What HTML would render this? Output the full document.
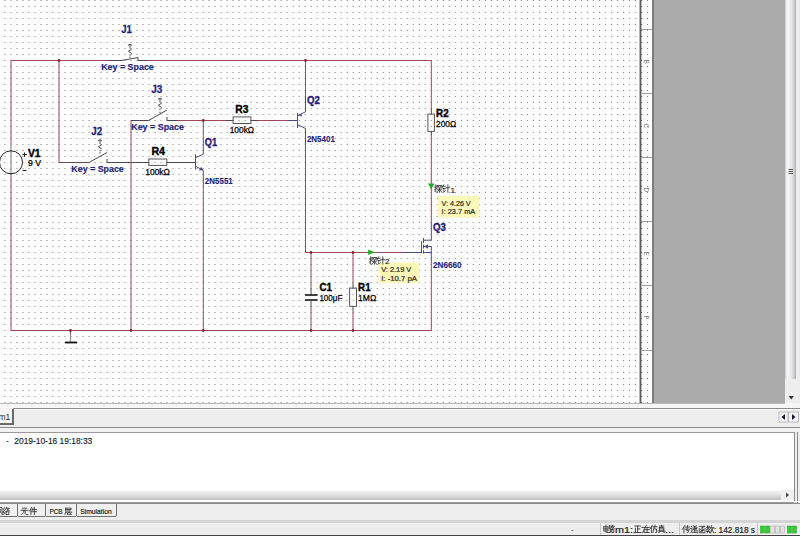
<!DOCTYPE html><html><head><meta charset="utf-8"><style>
html,body{margin:0;padding:0;width:800px;height:536px;overflow:hidden;background:#eeeeee;}
svg{position:absolute;left:0;top:0;}
</style></head><body>
<svg width="800" height="536" viewBox="0 0 800 536">
<defs>
<pattern id="dots" x="0" y="0" width="6" height="6" patternUnits="userSpaceOnUse"><rect x="4" y="0" width="2" height="1" fill="#a4a4a4"/></pattern>
<linearGradient id="vsb" x1="0" x2="1" y1="0" y2="0">
<stop offset="0" stop-color="#c8c8c8"/><stop offset="0.18" stop-color="#fafafa"/><stop offset="0.6" stop-color="#e6e6ea"/><stop offset="0.9" stop-color="#c4c4c8"/><stop offset="1" stop-color="#a8a8a8"/></linearGradient>
<linearGradient id="hsb" x1="0" x2="0" y1="0" y2="1">
<stop offset="0" stop-color="#f4f4f4"/><stop offset="0.5" stop-color="#e2e2e2"/><stop offset="1" stop-color="#c0c0c0"/></linearGradient>
</defs>

<rect x="0" y="0" width="640" height="403" fill="#ffffff" stroke="none" stroke-width="1"/>
<line x1="4.3" y1="0.5" x2="640" y2="0.5" stroke="#969696" stroke-width="1" stroke-dasharray="1.2 4.806"/>
<line x1="4.3" y1="6.5" x2="640" y2="6.5" stroke="#969696" stroke-width="1" stroke-dasharray="1.2 4.806"/>
<line x1="4.3" y1="12.5" x2="640" y2="12.5" stroke="#969696" stroke-width="1" stroke-dasharray="1.2 4.806"/>
<line x1="4.3" y1="18.5" x2="640" y2="18.5" stroke="#969696" stroke-width="1" stroke-dasharray="1.2 4.806"/>
<line x1="4.3" y1="24.5" x2="640" y2="24.5" stroke="#969696" stroke-width="1" stroke-dasharray="1.2 4.806"/>
<line x1="4.3" y1="30.5" x2="640" y2="30.5" stroke="#969696" stroke-width="1" stroke-dasharray="1.2 4.806"/>
<line x1="4.3" y1="36.5" x2="640" y2="36.5" stroke="#969696" stroke-width="1" stroke-dasharray="1.2 4.806"/>
<line x1="4.3" y1="42.5" x2="640" y2="42.5" stroke="#969696" stroke-width="1" stroke-dasharray="1.2 4.806"/>
<line x1="4.3" y1="48.5" x2="640" y2="48.5" stroke="#969696" stroke-width="1" stroke-dasharray="1.2 4.806"/>
<line x1="4.3" y1="54.5" x2="640" y2="54.5" stroke="#969696" stroke-width="1" stroke-dasharray="1.2 4.806"/>
<line x1="4.3" y1="60.5" x2="640" y2="60.5" stroke="#969696" stroke-width="1" stroke-dasharray="1.2 4.806"/>
<line x1="4.3" y1="66.5" x2="640" y2="66.5" stroke="#969696" stroke-width="1" stroke-dasharray="1.2 4.806"/>
<line x1="4.3" y1="72.5" x2="640" y2="72.5" stroke="#969696" stroke-width="1" stroke-dasharray="1.2 4.806"/>
<line x1="4.3" y1="78.5" x2="640" y2="78.5" stroke="#969696" stroke-width="1" stroke-dasharray="1.2 4.806"/>
<line x1="4.3" y1="84.5" x2="640" y2="84.5" stroke="#969696" stroke-width="1" stroke-dasharray="1.2 4.806"/>
<line x1="4.3" y1="90.5" x2="640" y2="90.5" stroke="#969696" stroke-width="1" stroke-dasharray="1.2 4.806"/>
<line x1="4.3" y1="96.5" x2="640" y2="96.5" stroke="#969696" stroke-width="1" stroke-dasharray="1.2 4.806"/>
<line x1="4.3" y1="102.5" x2="640" y2="102.5" stroke="#969696" stroke-width="1" stroke-dasharray="1.2 4.806"/>
<line x1="4.3" y1="108.5" x2="640" y2="108.5" stroke="#969696" stroke-width="1" stroke-dasharray="1.2 4.806"/>
<line x1="4.3" y1="114.5" x2="640" y2="114.5" stroke="#969696" stroke-width="1" stroke-dasharray="1.2 4.806"/>
<line x1="4.3" y1="120.5" x2="640" y2="120.5" stroke="#969696" stroke-width="1" stroke-dasharray="1.2 4.806"/>
<line x1="4.3" y1="126.5" x2="640" y2="126.5" stroke="#969696" stroke-width="1" stroke-dasharray="1.2 4.806"/>
<line x1="4.3" y1="132.5" x2="640" y2="132.5" stroke="#969696" stroke-width="1" stroke-dasharray="1.2 4.806"/>
<line x1="4.3" y1="138.5" x2="640" y2="138.5" stroke="#969696" stroke-width="1" stroke-dasharray="1.2 4.806"/>
<line x1="4.3" y1="144.5" x2="640" y2="144.5" stroke="#969696" stroke-width="1" stroke-dasharray="1.2 4.806"/>
<line x1="4.3" y1="150.5" x2="640" y2="150.5" stroke="#969696" stroke-width="1" stroke-dasharray="1.2 4.806"/>
<line x1="4.3" y1="156.5" x2="640" y2="156.5" stroke="#969696" stroke-width="1" stroke-dasharray="1.2 4.806"/>
<line x1="4.3" y1="162.5" x2="640" y2="162.5" stroke="#969696" stroke-width="1" stroke-dasharray="1.2 4.806"/>
<line x1="4.3" y1="168.5" x2="640" y2="168.5" stroke="#969696" stroke-width="1" stroke-dasharray="1.2 4.806"/>
<line x1="4.3" y1="174.5" x2="640" y2="174.5" stroke="#969696" stroke-width="1" stroke-dasharray="1.2 4.806"/>
<line x1="4.3" y1="180.5" x2="640" y2="180.5" stroke="#969696" stroke-width="1" stroke-dasharray="1.2 4.806"/>
<line x1="4.3" y1="186.5" x2="640" y2="186.5" stroke="#969696" stroke-width="1" stroke-dasharray="1.2 4.806"/>
<line x1="4.3" y1="192.5" x2="640" y2="192.5" stroke="#969696" stroke-width="1" stroke-dasharray="1.2 4.806"/>
<line x1="4.3" y1="198.5" x2="640" y2="198.5" stroke="#969696" stroke-width="1" stroke-dasharray="1.2 4.806"/>
<line x1="4.3" y1="204.5" x2="640" y2="204.5" stroke="#969696" stroke-width="1" stroke-dasharray="1.2 4.806"/>
<line x1="4.3" y1="210.5" x2="640" y2="210.5" stroke="#969696" stroke-width="1" stroke-dasharray="1.2 4.806"/>
<line x1="4.3" y1="216.5" x2="640" y2="216.5" stroke="#969696" stroke-width="1" stroke-dasharray="1.2 4.806"/>
<line x1="4.3" y1="222.5" x2="640" y2="222.5" stroke="#969696" stroke-width="1" stroke-dasharray="1.2 4.806"/>
<line x1="4.3" y1="228.5" x2="640" y2="228.5" stroke="#969696" stroke-width="1" stroke-dasharray="1.2 4.806"/>
<line x1="4.3" y1="234.5" x2="640" y2="234.5" stroke="#969696" stroke-width="1" stroke-dasharray="1.2 4.806"/>
<line x1="4.3" y1="240.5" x2="640" y2="240.5" stroke="#969696" stroke-width="1" stroke-dasharray="1.2 4.806"/>
<line x1="4.3" y1="246.5" x2="640" y2="246.5" stroke="#969696" stroke-width="1" stroke-dasharray="1.2 4.806"/>
<line x1="4.3" y1="252.5" x2="640" y2="252.5" stroke="#969696" stroke-width="1" stroke-dasharray="1.2 4.806"/>
<line x1="4.3" y1="258.5" x2="640" y2="258.5" stroke="#969696" stroke-width="1" stroke-dasharray="1.2 4.806"/>
<line x1="4.3" y1="264.5" x2="640" y2="264.5" stroke="#969696" stroke-width="1" stroke-dasharray="1.2 4.806"/>
<line x1="4.3" y1="270.5" x2="640" y2="270.5" stroke="#969696" stroke-width="1" stroke-dasharray="1.2 4.806"/>
<line x1="4.3" y1="276.5" x2="640" y2="276.5" stroke="#969696" stroke-width="1" stroke-dasharray="1.2 4.806"/>
<line x1="4.3" y1="282.5" x2="640" y2="282.5" stroke="#969696" stroke-width="1" stroke-dasharray="1.2 4.806"/>
<line x1="4.3" y1="288.5" x2="640" y2="288.5" stroke="#969696" stroke-width="1" stroke-dasharray="1.2 4.806"/>
<line x1="4.3" y1="294.5" x2="640" y2="294.5" stroke="#969696" stroke-width="1" stroke-dasharray="1.2 4.806"/>
<line x1="4.3" y1="300.5" x2="640" y2="300.5" stroke="#969696" stroke-width="1" stroke-dasharray="1.2 4.806"/>
<line x1="4.3" y1="306.5" x2="640" y2="306.5" stroke="#969696" stroke-width="1" stroke-dasharray="1.2 4.806"/>
<line x1="4.3" y1="312.5" x2="640" y2="312.5" stroke="#969696" stroke-width="1" stroke-dasharray="1.2 4.806"/>
<line x1="4.3" y1="318.5" x2="640" y2="318.5" stroke="#969696" stroke-width="1" stroke-dasharray="1.2 4.806"/>
<line x1="4.3" y1="324.5" x2="640" y2="324.5" stroke="#969696" stroke-width="1" stroke-dasharray="1.2 4.806"/>
<line x1="4.3" y1="330.5" x2="640" y2="330.5" stroke="#969696" stroke-width="1" stroke-dasharray="1.2 4.806"/>
<line x1="4.3" y1="336.5" x2="640" y2="336.5" stroke="#969696" stroke-width="1" stroke-dasharray="1.2 4.806"/>
<line x1="4.3" y1="342.5" x2="640" y2="342.5" stroke="#969696" stroke-width="1" stroke-dasharray="1.2 4.806"/>
<line x1="4.3" y1="348.5" x2="640" y2="348.5" stroke="#969696" stroke-width="1" stroke-dasharray="1.2 4.806"/>
<line x1="4.3" y1="354.5" x2="640" y2="354.5" stroke="#969696" stroke-width="1" stroke-dasharray="1.2 4.806"/>
<line x1="4.3" y1="360.5" x2="640" y2="360.5" stroke="#969696" stroke-width="1" stroke-dasharray="1.2 4.806"/>
<line x1="4.3" y1="366.5" x2="640" y2="366.5" stroke="#969696" stroke-width="1" stroke-dasharray="1.2 4.806"/>
<line x1="4.3" y1="372.5" x2="640" y2="372.5" stroke="#969696" stroke-width="1" stroke-dasharray="1.2 4.806"/>
<line x1="4.3" y1="378.5" x2="640" y2="378.5" stroke="#969696" stroke-width="1" stroke-dasharray="1.2 4.806"/>
<line x1="4.3" y1="384.5" x2="640" y2="384.5" stroke="#969696" stroke-width="1" stroke-dasharray="1.2 4.806"/>
<line x1="4.3" y1="390.5" x2="640" y2="390.5" stroke="#969696" stroke-width="1" stroke-dasharray="1.2 4.806"/>
<line x1="4.3" y1="396.5" x2="640" y2="396.5" stroke="#969696" stroke-width="1" stroke-dasharray="1.2 4.806"/>
<line x1="4.3" y1="402.5" x2="640" y2="402.5" stroke="#969696" stroke-width="1" stroke-dasharray="1.2 4.806"/>
<rect x="641" y="0" width="11" height="403" fill="#ffffff" stroke="none" stroke-width="1"/>
<line x1="646.9" y1="0.5" x2="648.1" y2="0.5" stroke="#8c8c8c" stroke-width="1"/>
<line x1="640.9" y1="0.5" x2="642.1" y2="0.5" stroke="#555" stroke-width="1"/>
<line x1="646.9" y1="6.5" x2="648.1" y2="6.5" stroke="#8c8c8c" stroke-width="1"/>
<line x1="640.9" y1="6.5" x2="642.1" y2="6.5" stroke="#555" stroke-width="1"/>
<line x1="646.9" y1="12.5" x2="648.1" y2="12.5" stroke="#8c8c8c" stroke-width="1"/>
<line x1="640.9" y1="12.5" x2="642.1" y2="12.5" stroke="#555" stroke-width="1"/>
<line x1="646.9" y1="18.5" x2="648.1" y2="18.5" stroke="#8c8c8c" stroke-width="1"/>
<line x1="640.9" y1="18.5" x2="642.1" y2="18.5" stroke="#555" stroke-width="1"/>
<line x1="646.9" y1="24.5" x2="648.1" y2="24.5" stroke="#8c8c8c" stroke-width="1"/>
<line x1="640.9" y1="24.5" x2="642.1" y2="24.5" stroke="#555" stroke-width="1"/>
<line x1="646.9" y1="30.5" x2="648.1" y2="30.5" stroke="#8c8c8c" stroke-width="1"/>
<line x1="640.9" y1="30.5" x2="642.1" y2="30.5" stroke="#555" stroke-width="1"/>
<line x1="646.9" y1="36.5" x2="648.1" y2="36.5" stroke="#8c8c8c" stroke-width="1"/>
<line x1="640.9" y1="36.5" x2="642.1" y2="36.5" stroke="#555" stroke-width="1"/>
<line x1="646.9" y1="42.5" x2="648.1" y2="42.5" stroke="#8c8c8c" stroke-width="1"/>
<line x1="640.9" y1="42.5" x2="642.1" y2="42.5" stroke="#555" stroke-width="1"/>
<line x1="646.9" y1="48.5" x2="648.1" y2="48.5" stroke="#8c8c8c" stroke-width="1"/>
<line x1="640.9" y1="48.5" x2="642.1" y2="48.5" stroke="#555" stroke-width="1"/>
<line x1="646.9" y1="54.5" x2="648.1" y2="54.5" stroke="#8c8c8c" stroke-width="1"/>
<line x1="640.9" y1="54.5" x2="642.1" y2="54.5" stroke="#555" stroke-width="1"/>
<line x1="646.9" y1="60.5" x2="648.1" y2="60.5" stroke="#8c8c8c" stroke-width="1"/>
<line x1="640.9" y1="60.5" x2="642.1" y2="60.5" stroke="#555" stroke-width="1"/>
<line x1="646.9" y1="66.5" x2="648.1" y2="66.5" stroke="#8c8c8c" stroke-width="1"/>
<line x1="640.9" y1="66.5" x2="642.1" y2="66.5" stroke="#555" stroke-width="1"/>
<line x1="646.9" y1="72.5" x2="648.1" y2="72.5" stroke="#8c8c8c" stroke-width="1"/>
<line x1="640.9" y1="72.5" x2="642.1" y2="72.5" stroke="#555" stroke-width="1"/>
<line x1="646.9" y1="78.5" x2="648.1" y2="78.5" stroke="#8c8c8c" stroke-width="1"/>
<line x1="640.9" y1="78.5" x2="642.1" y2="78.5" stroke="#555" stroke-width="1"/>
<line x1="646.9" y1="84.5" x2="648.1" y2="84.5" stroke="#8c8c8c" stroke-width="1"/>
<line x1="640.9" y1="84.5" x2="642.1" y2="84.5" stroke="#555" stroke-width="1"/>
<line x1="646.9" y1="90.5" x2="648.1" y2="90.5" stroke="#8c8c8c" stroke-width="1"/>
<line x1="640.9" y1="90.5" x2="642.1" y2="90.5" stroke="#555" stroke-width="1"/>
<line x1="646.9" y1="96.5" x2="648.1" y2="96.5" stroke="#8c8c8c" stroke-width="1"/>
<line x1="640.9" y1="96.5" x2="642.1" y2="96.5" stroke="#555" stroke-width="1"/>
<line x1="646.9" y1="102.5" x2="648.1" y2="102.5" stroke="#8c8c8c" stroke-width="1"/>
<line x1="640.9" y1="102.5" x2="642.1" y2="102.5" stroke="#555" stroke-width="1"/>
<line x1="646.9" y1="108.5" x2="648.1" y2="108.5" stroke="#8c8c8c" stroke-width="1"/>
<line x1="640.9" y1="108.5" x2="642.1" y2="108.5" stroke="#555" stroke-width="1"/>
<line x1="646.9" y1="114.5" x2="648.1" y2="114.5" stroke="#8c8c8c" stroke-width="1"/>
<line x1="640.9" y1="114.5" x2="642.1" y2="114.5" stroke="#555" stroke-width="1"/>
<line x1="646.9" y1="120.5" x2="648.1" y2="120.5" stroke="#8c8c8c" stroke-width="1"/>
<line x1="640.9" y1="120.5" x2="642.1" y2="120.5" stroke="#555" stroke-width="1"/>
<line x1="646.9" y1="126.5" x2="648.1" y2="126.5" stroke="#8c8c8c" stroke-width="1"/>
<line x1="640.9" y1="126.5" x2="642.1" y2="126.5" stroke="#555" stroke-width="1"/>
<line x1="646.9" y1="132.5" x2="648.1" y2="132.5" stroke="#8c8c8c" stroke-width="1"/>
<line x1="640.9" y1="132.5" x2="642.1" y2="132.5" stroke="#555" stroke-width="1"/>
<line x1="646.9" y1="138.5" x2="648.1" y2="138.5" stroke="#8c8c8c" stroke-width="1"/>
<line x1="640.9" y1="138.5" x2="642.1" y2="138.5" stroke="#555" stroke-width="1"/>
<line x1="646.9" y1="144.5" x2="648.1" y2="144.5" stroke="#8c8c8c" stroke-width="1"/>
<line x1="640.9" y1="144.5" x2="642.1" y2="144.5" stroke="#555" stroke-width="1"/>
<line x1="646.9" y1="150.5" x2="648.1" y2="150.5" stroke="#8c8c8c" stroke-width="1"/>
<line x1="640.9" y1="150.5" x2="642.1" y2="150.5" stroke="#555" stroke-width="1"/>
<line x1="646.9" y1="156.5" x2="648.1" y2="156.5" stroke="#8c8c8c" stroke-width="1"/>
<line x1="640.9" y1="156.5" x2="642.1" y2="156.5" stroke="#555" stroke-width="1"/>
<line x1="646.9" y1="162.5" x2="648.1" y2="162.5" stroke="#8c8c8c" stroke-width="1"/>
<line x1="640.9" y1="162.5" x2="642.1" y2="162.5" stroke="#555" stroke-width="1"/>
<line x1="646.9" y1="168.5" x2="648.1" y2="168.5" stroke="#8c8c8c" stroke-width="1"/>
<line x1="640.9" y1="168.5" x2="642.1" y2="168.5" stroke="#555" stroke-width="1"/>
<line x1="646.9" y1="174.5" x2="648.1" y2="174.5" stroke="#8c8c8c" stroke-width="1"/>
<line x1="640.9" y1="174.5" x2="642.1" y2="174.5" stroke="#555" stroke-width="1"/>
<line x1="646.9" y1="180.5" x2="648.1" y2="180.5" stroke="#8c8c8c" stroke-width="1"/>
<line x1="640.9" y1="180.5" x2="642.1" y2="180.5" stroke="#555" stroke-width="1"/>
<line x1="646.9" y1="186.5" x2="648.1" y2="186.5" stroke="#8c8c8c" stroke-width="1"/>
<line x1="640.9" y1="186.5" x2="642.1" y2="186.5" stroke="#555" stroke-width="1"/>
<line x1="646.9" y1="192.5" x2="648.1" y2="192.5" stroke="#8c8c8c" stroke-width="1"/>
<line x1="640.9" y1="192.5" x2="642.1" y2="192.5" stroke="#555" stroke-width="1"/>
<line x1="646.9" y1="198.5" x2="648.1" y2="198.5" stroke="#8c8c8c" stroke-width="1"/>
<line x1="640.9" y1="198.5" x2="642.1" y2="198.5" stroke="#555" stroke-width="1"/>
<line x1="646.9" y1="204.5" x2="648.1" y2="204.5" stroke="#8c8c8c" stroke-width="1"/>
<line x1="640.9" y1="204.5" x2="642.1" y2="204.5" stroke="#555" stroke-width="1"/>
<line x1="646.9" y1="210.5" x2="648.1" y2="210.5" stroke="#8c8c8c" stroke-width="1"/>
<line x1="640.9" y1="210.5" x2="642.1" y2="210.5" stroke="#555" stroke-width="1"/>
<line x1="646.9" y1="216.5" x2="648.1" y2="216.5" stroke="#8c8c8c" stroke-width="1"/>
<line x1="640.9" y1="216.5" x2="642.1" y2="216.5" stroke="#555" stroke-width="1"/>
<line x1="646.9" y1="222.5" x2="648.1" y2="222.5" stroke="#8c8c8c" stroke-width="1"/>
<line x1="640.9" y1="222.5" x2="642.1" y2="222.5" stroke="#555" stroke-width="1"/>
<line x1="646.9" y1="228.5" x2="648.1" y2="228.5" stroke="#8c8c8c" stroke-width="1"/>
<line x1="640.9" y1="228.5" x2="642.1" y2="228.5" stroke="#555" stroke-width="1"/>
<line x1="646.9" y1="234.5" x2="648.1" y2="234.5" stroke="#8c8c8c" stroke-width="1"/>
<line x1="640.9" y1="234.5" x2="642.1" y2="234.5" stroke="#555" stroke-width="1"/>
<line x1="646.9" y1="240.5" x2="648.1" y2="240.5" stroke="#8c8c8c" stroke-width="1"/>
<line x1="640.9" y1="240.5" x2="642.1" y2="240.5" stroke="#555" stroke-width="1"/>
<line x1="646.9" y1="246.5" x2="648.1" y2="246.5" stroke="#8c8c8c" stroke-width="1"/>
<line x1="640.9" y1="246.5" x2="642.1" y2="246.5" stroke="#555" stroke-width="1"/>
<line x1="646.9" y1="252.5" x2="648.1" y2="252.5" stroke="#8c8c8c" stroke-width="1"/>
<line x1="640.9" y1="252.5" x2="642.1" y2="252.5" stroke="#555" stroke-width="1"/>
<line x1="646.9" y1="258.5" x2="648.1" y2="258.5" stroke="#8c8c8c" stroke-width="1"/>
<line x1="640.9" y1="258.5" x2="642.1" y2="258.5" stroke="#555" stroke-width="1"/>
<line x1="646.9" y1="264.5" x2="648.1" y2="264.5" stroke="#8c8c8c" stroke-width="1"/>
<line x1="640.9" y1="264.5" x2="642.1" y2="264.5" stroke="#555" stroke-width="1"/>
<line x1="646.9" y1="270.5" x2="648.1" y2="270.5" stroke="#8c8c8c" stroke-width="1"/>
<line x1="640.9" y1="270.5" x2="642.1" y2="270.5" stroke="#555" stroke-width="1"/>
<line x1="646.9" y1="276.5" x2="648.1" y2="276.5" stroke="#8c8c8c" stroke-width="1"/>
<line x1="640.9" y1="276.5" x2="642.1" y2="276.5" stroke="#555" stroke-width="1"/>
<line x1="646.9" y1="282.5" x2="648.1" y2="282.5" stroke="#8c8c8c" stroke-width="1"/>
<line x1="640.9" y1="282.5" x2="642.1" y2="282.5" stroke="#555" stroke-width="1"/>
<line x1="646.9" y1="288.5" x2="648.1" y2="288.5" stroke="#8c8c8c" stroke-width="1"/>
<line x1="640.9" y1="288.5" x2="642.1" y2="288.5" stroke="#555" stroke-width="1"/>
<line x1="646.9" y1="294.5" x2="648.1" y2="294.5" stroke="#8c8c8c" stroke-width="1"/>
<line x1="640.9" y1="294.5" x2="642.1" y2="294.5" stroke="#555" stroke-width="1"/>
<line x1="646.9" y1="300.5" x2="648.1" y2="300.5" stroke="#8c8c8c" stroke-width="1"/>
<line x1="640.9" y1="300.5" x2="642.1" y2="300.5" stroke="#555" stroke-width="1"/>
<line x1="646.9" y1="306.5" x2="648.1" y2="306.5" stroke="#8c8c8c" stroke-width="1"/>
<line x1="640.9" y1="306.5" x2="642.1" y2="306.5" stroke="#555" stroke-width="1"/>
<line x1="646.9" y1="312.5" x2="648.1" y2="312.5" stroke="#8c8c8c" stroke-width="1"/>
<line x1="640.9" y1="312.5" x2="642.1" y2="312.5" stroke="#555" stroke-width="1"/>
<line x1="646.9" y1="318.5" x2="648.1" y2="318.5" stroke="#8c8c8c" stroke-width="1"/>
<line x1="640.9" y1="318.5" x2="642.1" y2="318.5" stroke="#555" stroke-width="1"/>
<line x1="646.9" y1="324.5" x2="648.1" y2="324.5" stroke="#8c8c8c" stroke-width="1"/>
<line x1="640.9" y1="324.5" x2="642.1" y2="324.5" stroke="#555" stroke-width="1"/>
<line x1="646.9" y1="330.5" x2="648.1" y2="330.5" stroke="#8c8c8c" stroke-width="1"/>
<line x1="640.9" y1="330.5" x2="642.1" y2="330.5" stroke="#555" stroke-width="1"/>
<line x1="646.9" y1="336.5" x2="648.1" y2="336.5" stroke="#8c8c8c" stroke-width="1"/>
<line x1="640.9" y1="336.5" x2="642.1" y2="336.5" stroke="#555" stroke-width="1"/>
<line x1="646.9" y1="342.5" x2="648.1" y2="342.5" stroke="#8c8c8c" stroke-width="1"/>
<line x1="640.9" y1="342.5" x2="642.1" y2="342.5" stroke="#555" stroke-width="1"/>
<line x1="646.9" y1="348.5" x2="648.1" y2="348.5" stroke="#8c8c8c" stroke-width="1"/>
<line x1="640.9" y1="348.5" x2="642.1" y2="348.5" stroke="#555" stroke-width="1"/>
<line x1="646.9" y1="354.5" x2="648.1" y2="354.5" stroke="#8c8c8c" stroke-width="1"/>
<line x1="640.9" y1="354.5" x2="642.1" y2="354.5" stroke="#555" stroke-width="1"/>
<line x1="646.9" y1="360.5" x2="648.1" y2="360.5" stroke="#8c8c8c" stroke-width="1"/>
<line x1="640.9" y1="360.5" x2="642.1" y2="360.5" stroke="#555" stroke-width="1"/>
<line x1="646.9" y1="366.5" x2="648.1" y2="366.5" stroke="#8c8c8c" stroke-width="1"/>
<line x1="640.9" y1="366.5" x2="642.1" y2="366.5" stroke="#555" stroke-width="1"/>
<line x1="646.9" y1="372.5" x2="648.1" y2="372.5" stroke="#8c8c8c" stroke-width="1"/>
<line x1="640.9" y1="372.5" x2="642.1" y2="372.5" stroke="#555" stroke-width="1"/>
<line x1="646.9" y1="378.5" x2="648.1" y2="378.5" stroke="#8c8c8c" stroke-width="1"/>
<line x1="640.9" y1="378.5" x2="642.1" y2="378.5" stroke="#555" stroke-width="1"/>
<line x1="646.9" y1="384.5" x2="648.1" y2="384.5" stroke="#8c8c8c" stroke-width="1"/>
<line x1="640.9" y1="384.5" x2="642.1" y2="384.5" stroke="#555" stroke-width="1"/>
<line x1="646.9" y1="390.5" x2="648.1" y2="390.5" stroke="#8c8c8c" stroke-width="1"/>
<line x1="640.9" y1="390.5" x2="642.1" y2="390.5" stroke="#555" stroke-width="1"/>
<line x1="646.9" y1="396.5" x2="648.1" y2="396.5" stroke="#8c8c8c" stroke-width="1"/>
<line x1="640.9" y1="396.5" x2="642.1" y2="396.5" stroke="#555" stroke-width="1"/>
<line x1="646.9" y1="402.5" x2="648.1" y2="402.5" stroke="#8c8c8c" stroke-width="1"/>
<line x1="640.9" y1="402.5" x2="642.1" y2="402.5" stroke="#555" stroke-width="1"/>
<rect x="639" y="0" width="1" height="403" fill="#b4b4b4" stroke="none" stroke-width="1"/>
<rect x="640" y="0" width="1.4" height="403" fill="#5e5e5e" stroke="none" stroke-width="1"/>
<rect x="652" y="0" width="133" height="403" fill="#ababab" stroke="none" stroke-width="1"/>
<rect x="652" y="0" width="2" height="403" fill="#7c7c7c" stroke="none" stroke-width="1"/>
<line x1="641" y1="29.5" x2="652" y2="29.5" stroke="#a0a0a0" stroke-width="1"/>
<line x1="641" y1="93.5" x2="652" y2="93.5" stroke="#a0a0a0" stroke-width="1"/>
<line x1="641" y1="157.5" x2="652" y2="157.5" stroke="#a0a0a0" stroke-width="1"/>
<line x1="641" y1="221.5" x2="652" y2="221.5" stroke="#a0a0a0" stroke-width="1"/>
<line x1="641" y1="285.5" x2="652" y2="285.5" stroke="#a0a0a0" stroke-width="1"/>
<line x1="641" y1="350.5" x2="652" y2="350.5" stroke="#a0a0a0" stroke-width="1"/>
<text x="0" y="0" transform="translate(643.6 59.5) rotate(90)" font-family="Liberation Sans" font-size="6.5" fill="#7a7a7a">B</text>
<text x="0" y="0" transform="translate(643.6 123.5) rotate(90)" font-family="Liberation Sans" font-size="6.5" fill="#7a7a7a">C</text>
<text x="0" y="0" transform="translate(643.6 187.5) rotate(90)" font-family="Liberation Sans" font-size="6.5" fill="#7a7a7a">D</text>
<text x="0" y="0" transform="translate(643.6 251.5) rotate(90)" font-family="Liberation Sans" font-size="6.5" fill="#7a7a7a">E</text>
<text x="0" y="0" transform="translate(643.6 315.5) rotate(90)" font-family="Liberation Sans" font-size="6.5" fill="#7a7a7a">F</text>
<rect x="785" y="0" width="15" height="403" fill="#eeeeee" stroke="none" stroke-width="1"/>
<rect x="785" y="0" width="11" height="379" fill="url(#vsb)" stroke="none" stroke-width="1"/>
<line x1="788.5" y1="169.5" x2="793" y2="169.5" stroke="#555" stroke-width="1"/>
<line x1="788.5" y1="171.5" x2="793" y2="171.5" stroke="#555" stroke-width="1"/>
<line x1="788.5" y1="173.5" x2="793" y2="173.5" stroke="#555" stroke-width="1"/>
<path d="M788.5 396 L794 396 L791.25 399.5 Z" fill="#333"/>
<rect x="0" y="403" width="800" height="5" fill="#f6f6f6" stroke="none" stroke-width="1"/>
<rect x="0" y="403" width="785" height="1" fill="#b8b8b8" stroke="none" stroke-width="1"/>
<rect x="13" y="408" width="787" height="1" fill="#8c8c8c" stroke="none" stroke-width="1"/>
<rect x="0" y="409" width="800" height="18" fill="#eeeeee" stroke="none" stroke-width="1"/>
<rect x="0" y="409" width="13" height="15" fill="#f8f8f8" stroke="none" stroke-width="1"/>
<rect x="12" y="409" width="2" height="16" fill="#6a6a6a" stroke="none" stroke-width="1"/>
<rect x="0" y="423" width="14" height="2" fill="#6a6a6a" stroke="none" stroke-width="1"/>
<rect x="14" y="409" width="786" height="1" fill="#fafafa" stroke="none" stroke-width="1"/>
<text x="-1.5" y="420" font-family="Liberation Sans" font-size="8.5" fill="#222">m1</text>
<rect x="779" y="412" width="9" height="10" fill="#f4f4f8" stroke="#9a9a9a" stroke-width="0.6"/>
<rect x="788.5" y="412" width="10" height="10" fill="#f4f4f8" stroke="#9a9a9a" stroke-width="0.6"/>
<path d="M785 414 L785 420 L781.5 417 Z" fill="#1a1a3a"/>
<path d="M792 414 L792 420 L795.5 417 Z" fill="#1a1a3a"/>
<rect x="0" y="427" width="800" height="1" fill="#8c8c8c" stroke="none" stroke-width="1"/>
<rect x="0" y="428" width="800" height="4" fill="#f2f2f2" stroke="none" stroke-width="1"/>
<rect x="0" y="432" width="797" height="73" fill="#9a9a9a" stroke="none" stroke-width="1"/>
<rect x="0" y="433" width="794" height="68" fill="#ffffff" stroke="none" stroke-width="1"/>
<rect x="794" y="432" width="3" height="72" fill="#eeeeee" stroke="none" stroke-width="1"/>
<rect x="797" y="432" width="3" height="72" fill="#eeeeee" stroke="none" stroke-width="1"/>
<line x1="794.5" y1="432" x2="794.5" y2="502" stroke="#8a8a8a" stroke-width="1"/>
<line x1="797.5" y1="432" x2="797.5" y2="505" stroke="#8a8a8a" stroke-width="1"/>
<text x="6" y="443.6" font-family="Liberation Sans" font-size="8.5" fill="#222">-</text>
<text x="14.3" y="443.6" font-family="Liberation Sans" font-size="8.5" fill="#222" textLength="78" lengthAdjust="spacingAndGlyphs" stroke="#222" stroke-width="0.15">2019-10-16 19:18:33</text>
<rect x="0" y="490" width="794" height="10" fill="#f0f0f0" stroke="none" stroke-width="1"/>
<rect x="0" y="490" width="781" height="10" fill="url(#hsb)" stroke="none" stroke-width="1"/>
<line x1="0" y1="490.5" x2="781" y2="490.5" stroke="#fafafa" stroke-width="1"/>
<path d="M786 492.5 L786 497.5 L789 495 Z" fill="#444"/>
<rect x="0" y="501" width="800" height="1" fill="#f8f8f8" stroke="none" stroke-width="1"/>
<rect x="0" y="503" width="800" height="1" fill="#8a8a8a" stroke="none" stroke-width="1"/>
<rect x="0" y="504" width="800" height="17" fill="#eeeeee" stroke="none" stroke-width="1"/>
<rect x="-20" y="504" width="37" height="12" fill="#f0f0f0" stroke="none" stroke-width="1"/>
<line x1="17.5" y1="504" x2="17.5" y2="516" stroke="#707070" stroke-width="1"/>
<line x1="-20" y1="516.5" x2="17" y2="516.5" stroke="#707070" stroke-width="1"/>
<rect x="18" y="504" width="27" height="12" fill="#f0f0f0" stroke="none" stroke-width="1"/>
<line x1="45.5" y1="504" x2="45.5" y2="516" stroke="#707070" stroke-width="1"/>
<line x1="18" y1="516.5" x2="45" y2="516.5" stroke="#707070" stroke-width="1"/>
<rect x="46" y="504" width="30" height="12" fill="#f0f0f0" stroke="none" stroke-width="1"/>
<line x1="76.5" y1="504" x2="76.5" y2="516" stroke="#707070" stroke-width="1"/>
<line x1="46" y1="516.5" x2="76" y2="516.5" stroke="#707070" stroke-width="1"/>
<rect x="77" y="504" width="39" height="12" fill="#f0f0f0" stroke="none" stroke-width="1"/>
<line x1="116.5" y1="504" x2="116.5" y2="516" stroke="#707070" stroke-width="1"/>
<line x1="77" y1="516.5" x2="116" y2="516.5" stroke="#707070" stroke-width="1"/>
<text x="49.5" y="514" font-family="Liberation Sans" font-size="8" fill="#222" textLength="13" lengthAdjust="spacingAndGlyphs" stroke="#222" stroke-width="0.2">PCB</text>
<path d="M65.68 508.18 L71.12 508.18 L71.12 509.54 L65.68 509.54 M65.68 508.18 L65.68 511.58 L65.00 514.30 M67.04 510.90 L70.44 510.90 M66.36 512.26 L71.80 512.26 M68.40 512.26 L67.04 514.30 L71.12 514.30 M69.76 512.94 L71.12 514.30" fill="none" stroke="#333" stroke-width="0.85" stroke-linecap="square"/>
<path d="M22.40 508.20 L26.60 508.20 M21.00 510.30 L28.00 510.30 M23.80 510.30 L23.80 512.40 L21.70 514.50 M25.20 510.30 L25.20 513.80 L25.90 514.50 L28.00 514.50 M31.60 507.50 L29.50 511.00 M30.90 509.60 L30.90 514.50 M33.00 508.20 L32.30 510.30 M32.30 509.60 L36.50 509.60 M31.60 511.70 L36.50 511.70 M34.40 507.50 L34.40 514.50" fill="none" stroke="#333" stroke-width="0.85" stroke-linecap="square"/>
<path d="M-5.00 514.50 L-5.00 507.50 L2.00 507.50 L2.00 514.50 M-3.60 509.60 L-2.20 512.40 M-2.20 509.60 L-3.60 512.40 M-0.80 509.60 L0.60 512.40 M0.60 509.60 L-0.80 512.40 M4.60 507.50 L3.20 509.60 L4.60 510.30 L2.50 512.40 L4.60 512.40 M2.50 514.50 L4.60 513.80 M6.70 507.50 L5.30 509.60 M6.70 508.20 L9.50 508.20 L6.70 511.00 M6.70 508.90 L9.50 511.00 M6.00 511.70 L8.80 511.70 L8.80 514.50 L6.00 514.50 L6.00 511.70" fill="none" stroke="#333" stroke-width="0.85" stroke-linecap="square"/>
<text x="80.2" y="513.8" font-family="Liberation Sans" font-size="8" fill="#222" textLength="31.5" lengthAdjust="spacingAndGlyphs" stroke="#222" stroke-width="0.2">Simulation</text>
<rect x="0" y="520" width="800" height="3" fill="#d4d4d4" stroke="none" stroke-width="1"/>
<rect x="0" y="523" width="800" height="12" fill="#eeeeee" stroke="none" stroke-width="1"/>
<rect x="0" y="535" width="800" height="1" fill="#444" stroke="none" stroke-width="1"/>
<line x1="600.5" y1="523" x2="600.5" y2="535" stroke="#c8c8c8" stroke-width="1"/>
<line x1="679.5" y1="523" x2="679.5" y2="535" stroke="#c8c8c8" stroke-width="1"/>
<line x1="757.5" y1="523" x2="757.5" y2="535" stroke="#c8c8c8" stroke-width="1"/>
<text x="571" y="531.5" font-family="Liberation Sans" font-size="8" fill="#333">-</text>
<path d="M603.82 526.74 L607.98 526.74 L607.98 531.06 L603.82 531.06 L603.82 526.74 M603.82 528.90 L607.98 528.90 M605.90 525.30 L605.90 531.78 L606.42 532.50 L608.50 532.50 M609.20 526.02 L611.28 526.02 L611.28 528.18 L609.20 528.18 L609.20 526.02 M610.24 528.18 L610.24 531.78 M610.24 529.62 L611.28 529.62 M609.20 532.50 L611.28 531.78 M612.32 525.30 L611.80 527.46 M612.32 526.02 L614.40 526.02 L612.32 528.90 M612.32 526.74 L614.40 528.90 M611.80 529.62 L613.88 529.62 L613.88 532.50 L611.80 532.50 L611.80 529.62" fill="none" stroke="#333" stroke-width="0.85" stroke-linecap="square"/>
<text x="615" y="532.6" font-family="Liberation Sans" font-size="8.6" fill="#222" textLength="18" lengthAdjust="spacingAndGlyphs" stroke="#222" stroke-width="0.2">m1:</text>
<path d="M634.72 526.02 L640.48 526.02 M637.60 526.02 L637.60 532.50 M637.60 528.90 L639.76 528.90 M635.44 528.18 L635.44 532.50 M634.00 532.50 L641.20 532.50 M642.00 527.46 L649.20 527.46 M646.32 525.30 L642.72 532.50 M644.16 529.62 L644.16 532.50 M645.60 529.62 L649.20 529.62 M647.04 527.46 L647.04 532.50 M644.88 532.50 L649.20 532.50 M652.16 525.30 L650.00 528.90 M651.44 527.46 L651.44 532.50 M655.04 525.30 L655.04 526.74 M652.88 526.74 L657.20 526.74 M654.32 526.74 L652.88 532.50 M654.32 528.90 L656.48 528.90 L656.48 532.50 L655.76 532.50 M659.44 526.02 L663.76 526.02 M661.60 525.30 L661.60 526.74 M659.44 527.46 L663.76 527.46 L663.76 531.06 L659.44 531.06 L659.44 527.46 M659.44 528.90 L663.76 528.90 M658.00 531.06 L665.20 531.06 M660.16 531.78 L658.72 532.50 M663.04 531.78 L664.48 532.50" fill="none" stroke="#333" stroke-width="0.85" stroke-linecap="square"/>
<text x="665" y="532.6" font-family="Liberation Sans" font-size="8.6" fill="#222" textLength="9" lengthAdjust="spacingAndGlyphs" stroke="#222" stroke-width="0.2">...</text>
<path d="M684.66 525.60 L682.50 529.20 M683.94 527.76 L683.94 532.80 M685.38 527.04 L689.70 527.04 M685.38 529.20 L689.70 529.20 M687.54 525.60 L686.82 530.64 L688.98 530.64 L687.54 532.80 M691.22 526.32 L691.94 527.04 M690.50 528.48 L691.94 528.48 L691.94 531.36 L690.50 532.80 M691.94 532.08 L697.70 532.80 M693.38 525.60 L694.10 526.32 M696.26 525.60 L695.54 526.32 M693.38 527.04 L696.98 527.04 L696.98 528.48 L693.38 528.48 L693.38 529.92 L696.98 529.92 L696.98 531.36 M694.82 526.32 L694.82 532.08 M699.22 526.32 L704.98 526.32 L702.10 527.76 M699.22 528.48 L699.22 532.80 L704.98 532.80 L704.98 528.48 M702.10 527.04 L702.10 532.08 M700.66 529.20 L701.38 530.64 M703.54 529.20 L702.82 530.64 M700.66 531.36 L703.54 529.92 M707.22 526.32 L707.94 527.04 M709.38 526.32 L708.66 527.04 M706.50 527.76 L710.10 527.76 M707.94 525.60 L707.94 529.20 L706.50 529.92 M707.94 528.48 L710.10 529.92 M706.50 531.36 L710.10 531.36 M708.66 529.92 L707.22 532.80 M707.94 531.36 L710.10 532.80 M711.54 525.60 L710.82 528.48 M710.82 527.76 L713.70 527.76 M712.98 527.76 L710.82 532.80 M711.54 529.20 L713.70 532.80" fill="none" stroke="#333" stroke-width="0.85" stroke-linecap="square"/>
<text x="714" y="532.6" font-family="Liberation Sans" font-size="8.6" fill="#222" textLength="41" lengthAdjust="spacingAndGlyphs" stroke="#222" stroke-width="0.2">: 142.818 s</text>
<rect x="760.5" y="526" width="4" height="7" fill="#33cc33" stroke="#1f9a1f" stroke-width="0.5"/>
<rect x="765.5" y="526" width="4" height="7" fill="#33cc33" stroke="#1f9a1f" stroke-width="0.5"/>
<rect x="770.5" y="526" width="4" height="7" fill="#e4e4e4" stroke="#a0a0a0" stroke-width="0.5"/>
<rect x="775.5" y="526" width="4" height="7" fill="#e4e4e4" stroke="#a0a0a0" stroke-width="0.5"/>
<rect x="780.5" y="526" width="4" height="7" fill="#e4e4e4" stroke="#a0a0a0" stroke-width="0.5"/>
<rect x="787.5" y="526" width="4" height="7" fill="#33cc33" stroke="#1f9a1f" stroke-width="0.5"/>
<rect x="792.5" y="526" width="4" height="7" fill="#33cc33" stroke="#1f9a1f" stroke-width="0.5"/>
<line x1="11" y1="60.5" x2="108" y2="60.5" stroke="#a04656" stroke-width="1"/>
<line x1="148" y1="60.5" x2="431.5" y2="60.5" stroke="#a04656" stroke-width="1"/>
<line x1="108" y1="60.5" x2="121" y2="60.5" stroke="#4a4650" stroke-width="1"/>
<path d="M121 60.5 L130 59 L138 57.5 L138 60.5 L148 60.5" fill="none" stroke="#4a4650" stroke-width="1"/>
<line x1="11" y1="60.5" x2="11" y2="144" stroke="#a04656" stroke-width="1"/>
<line x1="11" y1="176" x2="11" y2="330.5" stroke="#a04656" stroke-width="1"/>
<line x1="11" y1="144" x2="11" y2="176" stroke="#8a8a8a" stroke-width="1.2"/>
<circle cx="11" cy="162.3" r="11.5" fill="none" stroke="#222" stroke-width="1"/>
<line x1="22.5" y1="154.5" x2="27" y2="154.5" stroke="#222" stroke-width="1"/>
<line x1="24.5" y1="152.5" x2="24.5" y2="157" stroke="#222" stroke-width="1"/>
<line x1="22.5" y1="170.5" x2="26.5" y2="170.5" stroke="#222" stroke-width="1"/>
<text x="28.0" y="156.6" font-family="Liberation Sans" font-size="10.0" fill="#000" font-weight="bold" textLength="12.6" lengthAdjust="spacingAndGlyphs" stroke="#000" stroke-width="0.35">V1</text>
<text x="28" y="165.6" font-family="Liberation Sans" font-size="8.3" fill="#000" textLength="13" lengthAdjust="spacingAndGlyphs" stroke="#000" stroke-width="0.25">9 V</text>
<line x1="11" y1="330.5" x2="431.5" y2="330.5" stroke="#a04656" stroke-width="1"/>
<line x1="70.5" y1="331" x2="70.5" y2="334" stroke="#a04656" stroke-width="1"/>
<line x1="70.5" y1="334" x2="70.5" y2="342" stroke="#8f8f8f" stroke-width="1.2"/>
<line x1="65" y1="342.5" x2="77" y2="342.5" stroke="#111" stroke-width="1.8"/>
<line x1="59" y1="60.5" x2="59" y2="162.5" stroke="#a04656" stroke-width="1"/>
<line x1="59" y1="162.5" x2="89" y2="162.5" stroke="#6a4a5a" stroke-width="1"/>
<path d="M89 162.5 L107 152.5 M107 159 L107 162.5 L143.6 162.5" fill="none" stroke="#4a4650" stroke-width="1"/>
<line x1="143.6" y1="162.5" x2="148.8" y2="162.5" stroke="#4a4650" stroke-width="1"/>
<rect x="148.8" y="159" width="18" height="6.4" fill="none" stroke="#555" stroke-width="1"/>
<line x1="166.8" y1="162.5" x2="195" y2="162.5" stroke="#4a4650" stroke-width="1"/>
<text x="151.4" y="155.2" font-family="Liberation Sans" font-size="10.0" fill="#000" font-weight="bold" textLength="13.6" lengthAdjust="spacingAndGlyphs" stroke="#000" stroke-width="0.35">R4</text>
<text x="145.2" y="175.3" font-family="Liberation Sans" font-size="8.3" fill="#000" textLength="24.8" lengthAdjust="spacingAndGlyphs" stroke="#000" stroke-width="0.25">100kΩ</text>
<line x1="131" y1="120.5" x2="131" y2="330.5" stroke="#a04656" stroke-width="1"/>
<path d="M131 120.5 L148.5 120.5 L167 110 M167 117 L167 120.5 L178 120.5" fill="none" stroke="#4a4650" stroke-width="1"/>
<line x1="178" y1="120.5" x2="226" y2="120.5" stroke="#a04656" stroke-width="1"/>
<line x1="226" y1="120.5" x2="233.1" y2="120.5" stroke="#4a4650" stroke-width="1"/>
<rect x="233.1" y="116.9" width="17.8" height="6.6" fill="none" stroke="#555" stroke-width="1"/>
<line x1="250.9" y1="120.5" x2="258" y2="120.5" stroke="#4a4650" stroke-width="1"/>
<line x1="258" y1="120.5" x2="287" y2="120.5" stroke="#a04656" stroke-width="1"/>
<line x1="287" y1="120.5" x2="297.2" y2="120.5" stroke="#4c4c84" stroke-width="1"/>
<text x="235.3" y="113.2" font-family="Liberation Sans" font-size="10.0" fill="#000" font-weight="bold" textLength="13.2" lengthAdjust="spacingAndGlyphs" stroke="#000" stroke-width="0.35">R3</text>
<text x="229.7" y="133.2" font-family="Liberation Sans" font-size="8.3" fill="#000" textLength="24.4" lengthAdjust="spacingAndGlyphs" stroke="#000" stroke-width="0.25">100kΩ</text>
<line x1="203.3" y1="120.5" x2="203.3" y2="138.6" stroke="#a04656" stroke-width="1"/>
<line x1="203.3" y1="138.6" x2="203.3" y2="154.3" stroke="#4c4c84" stroke-width="1"/>
<line x1="195.5" y1="154.3" x2="195.5" y2="169.6" stroke="#4c4c84" stroke-width="1"/>
<line x1="195.5" y1="157.7" x2="203.3" y2="154.3" stroke="#4c4c84" stroke-width="1"/>
<line x1="195.5" y1="166.3" x2="203.3" y2="170.3" stroke="#4c4c84" stroke-width="1"/>
<path d="M203.3 170.3 L199 170.6 L201.2 166.8 Z" fill="#4c4c84"/>
<line x1="203.3" y1="170.3" x2="203.3" y2="184" stroke="#4c4c84" stroke-width="1"/>
<line x1="203.3" y1="184" x2="203.3" y2="330.5" stroke="#a04656" stroke-width="1"/>
<text x="204.8" y="146.2" font-family="Liberation Sans" font-size="10.0" fill="#1e1e7a" font-weight="bold" textLength="12.2" lengthAdjust="spacingAndGlyphs" stroke="#1e1e7a" stroke-width="0.35">Q1</text>
<text x="204.8" y="184" font-family="Liberation Sans" font-size="8.6" fill="#1e1e7a" font-weight="bold" textLength="28" lengthAdjust="spacingAndGlyphs" stroke="#1e1e7a" stroke-width="0.12">2N5551</text>
<line x1="305.5" y1="60.5" x2="305.5" y2="96" stroke="#a04656" stroke-width="1"/>
<line x1="305.5" y1="96" x2="305.5" y2="111.8" stroke="#4c4c84" stroke-width="1"/>
<line x1="297.5" y1="113" x2="297.5" y2="128" stroke="#4c4c84" stroke-width="1"/>
<line x1="297.2" y1="116" x2="305.5" y2="111.8" stroke="#4c4c84" stroke-width="1"/>
<path d="M298.3 115.6 L301.4 113.4 L301.9 116.4 Z" fill="#4c4c84"/>
<line x1="297.2" y1="124.5" x2="305.5" y2="128.5" stroke="#4c4c84" stroke-width="1"/>
<line x1="305.5" y1="128.5" x2="305.5" y2="145" stroke="#4c4c84" stroke-width="1"/>
<line x1="305.5" y1="145" x2="305.5" y2="252.5" stroke="#a04656" stroke-width="1"/>
<text x="306.9" y="104.2" font-family="Liberation Sans" font-size="10.0" fill="#1e1e7a" font-weight="bold" textLength="12.9" lengthAdjust="spacingAndGlyphs" stroke="#1e1e7a" stroke-width="0.35">Q2</text>
<text x="306.9" y="141.5" font-family="Liberation Sans" font-size="8.6" fill="#1e1e7a" font-weight="bold" textLength="28" lengthAdjust="spacingAndGlyphs" stroke="#1e1e7a" stroke-width="0.12">2N5401</text>
<line x1="305.5" y1="252.5" x2="405" y2="252.5" stroke="#a04656" stroke-width="1"/>
<line x1="405" y1="252.5" x2="421.5" y2="252.5" stroke="#4c4c84" stroke-width="1"/>
<line x1="311" y1="252.5" x2="311" y2="287.5" stroke="#a04656" stroke-width="1"/>
<line x1="311" y1="287.5" x2="311" y2="295" stroke="#4a4650" stroke-width="1"/>
<line x1="305" y1="295" x2="317.5" y2="295" stroke="#111" stroke-width="1.6"/>
<line x1="305" y1="300" x2="317.5" y2="300" stroke="#111" stroke-width="1.6"/>
<line x1="311" y1="300" x2="311" y2="307" stroke="#4a4650" stroke-width="1"/>
<line x1="311" y1="307" x2="311" y2="330.5" stroke="#a04656" stroke-width="1"/>
<text x="319.4" y="291.3" font-family="Liberation Sans" font-size="10.0" fill="#000" font-weight="bold" textLength="12.5" lengthAdjust="spacingAndGlyphs" stroke="#000" stroke-width="0.35">C1</text>
<text x="319.4" y="301.3" font-family="Liberation Sans" font-size="8.3" fill="#000" textLength="23" lengthAdjust="spacingAndGlyphs" stroke="#000" stroke-width="0.25">100μF</text>
<line x1="353" y1="252.5" x2="353" y2="283" stroke="#a04656" stroke-width="1"/>
<line x1="353" y1="283" x2="353" y2="288.1" stroke="#4a4650" stroke-width="1"/>
<rect x="349.6" y="288.1" width="6.9" height="18.2" fill="none" stroke="#555" stroke-width="1"/>
<line x1="353" y1="306.3" x2="353" y2="311" stroke="#4a4650" stroke-width="1"/>
<line x1="353" y1="311" x2="353" y2="330.5" stroke="#a04656" stroke-width="1"/>
<text x="358.1" y="291.3" font-family="Liberation Sans" font-size="10.0" fill="#000" font-weight="bold" textLength="12.5" lengthAdjust="spacingAndGlyphs" stroke="#000" stroke-width="0.35">R1</text>
<text x="358.1" y="301.3" font-family="Liberation Sans" font-size="8.3" fill="#000" textLength="18.2" lengthAdjust="spacingAndGlyphs" stroke="#000" stroke-width="0.25">1MΩ</text>
<line x1="431.3" y1="60.5" x2="431.3" y2="109" stroke="#a04656" stroke-width="1"/>
<line x1="431.3" y1="109" x2="431.3" y2="114.1" stroke="#4a4650" stroke-width="1"/>
<rect x="427.9" y="114.1" width="6.5" height="17.3" fill="none" stroke="#555" stroke-width="1"/>
<line x1="431.3" y1="131.4" x2="431.3" y2="136" stroke="#4a4650" stroke-width="1"/>
<line x1="431.3" y1="136" x2="431.3" y2="222.8" stroke="#a04656" stroke-width="1"/>
<text x="436.1" y="116.9" font-family="Liberation Sans" font-size="10.0" fill="#000" font-weight="bold" textLength="12.6" lengthAdjust="spacingAndGlyphs" stroke="#000" stroke-width="0.35">R2</text>
<text x="436.1" y="126.7" font-family="Liberation Sans" font-size="8.3" fill="#000" textLength="20.1" lengthAdjust="spacingAndGlyphs" stroke="#000" stroke-width="0.25">200Ω</text>
<line x1="431.3" y1="222.8" x2="431.3" y2="240.2" stroke="#4c4c84" stroke-width="1"/>
<line x1="423" y1="240.2" x2="431.3" y2="240.2" stroke="#4c4c84" stroke-width="1"/>
<line x1="423" y1="246.5" x2="431.3" y2="246.5" stroke="#4c4c84" stroke-width="1"/>
<path d="M424 246.5 L428 244.3 L428 248.7 Z" fill="#4c4c84"/>
<line x1="423" y1="252.5" x2="431.3" y2="252.5" stroke="#4c4c84" stroke-width="1"/>
<line x1="431.3" y1="246.5" x2="431.3" y2="262" stroke="#4c4c84" stroke-width="1"/>
<line x1="431.3" y1="262" x2="431.3" y2="330.5" stroke="#a04656" stroke-width="1"/>
<line x1="423.5" y1="238" x2="423.5" y2="243" stroke="#4c4c84" stroke-width="1"/>
<line x1="423.5" y1="244.6" x2="423.5" y2="248.6" stroke="#4c4c84" stroke-width="1"/>
<line x1="423.5" y1="250.2" x2="423.5" y2="253.6" stroke="#4c4c84" stroke-width="1"/>
<line x1="421.5" y1="241.3" x2="421.5" y2="253" stroke="#4c4c84" stroke-width="1"/>
<text x="433.0" y="230.7" font-family="Liberation Sans" font-size="10.0" fill="#1e1e7a" font-weight="bold" textLength="12.9" lengthAdjust="spacingAndGlyphs" stroke="#1e1e7a" stroke-width="0.35">Q3</text>
<text x="433" y="268.1" font-family="Liberation Sans" font-size="8.6" fill="#1e1e7a" font-weight="bold" textLength="28.5" lengthAdjust="spacingAndGlyphs" stroke="#1e1e7a" stroke-width="0.12">2N6660</text>
<text x="121.2" y="32.9" font-family="Liberation Sans" font-size="10.0" fill="#1e1e7a" font-weight="bold" textLength="10.6" lengthAdjust="spacingAndGlyphs" stroke="#1e1e7a" stroke-width="0.25">J1</text>
<text x="101.2" y="69.8" font-family="Liberation Sans" font-size="9" fill="#1e1e7a" font-weight="bold" textLength="52.6" lengthAdjust="spacingAndGlyphs" stroke="#1e1e7a" stroke-width="0.18">Key = Space</text>
<text x="151.2" y="92.9" font-family="Liberation Sans" font-size="10.0" fill="#1e1e7a" font-weight="bold" textLength="11.1" lengthAdjust="spacingAndGlyphs" stroke="#1e1e7a" stroke-width="0.25">J3</text>
<text x="131.2" y="130" font-family="Liberation Sans" font-size="9" fill="#1e1e7a" font-weight="bold" textLength="52.8" lengthAdjust="spacingAndGlyphs" stroke="#1e1e7a" stroke-width="0.18">Key = Space</text>
<text x="91.3" y="135.1" font-family="Liberation Sans" font-size="10.0" fill="#1e1e7a" font-weight="bold" textLength="11" lengthAdjust="spacingAndGlyphs" stroke="#1e1e7a" stroke-width="0.25">J2</text>
<text x="71.3" y="172" font-family="Liberation Sans" font-size="9" fill="#1e1e7a" font-weight="bold" textLength="52.5" lengthAdjust="spacingAndGlyphs" stroke="#1e1e7a" stroke-width="0.18">Key = Space</text>
<path d="M128 45.5 Q130 42.5 132 45.5 M130 44.5 L130 48.5 M131.8 49 L128.4 51.3 L131.8 53.6 M130 54.5 L130 55.8 M130 56.6 L130 58" fill="none" stroke="#333" stroke-width="0.9"/>
<path d="M158 99.5 Q160 96.5 162 99.5 M160 98.5 L160 102.5 M161.8 103 L158.4 105.3 L161.8 107.6 M160 108.5 L160 109.8 M160 111.6 L160 113" fill="none" stroke="#333" stroke-width="0.9"/>
<path d="M98 141.0 Q100 138.0 102 141.0 M100 140.0 L100 144.0 M101.8 144.5 L98.4 146.8 L101.8 149.1 M100 150.0 L100 151.3 M100 152.2 L100 153.6" fill="none" stroke="#333" stroke-width="0.9"/>
<circle cx="59" cy="60.5" r="1.45" fill="#80283a"/>
<circle cx="305.5" cy="60.5" r="1.45" fill="#80283a"/>
<circle cx="203.3" cy="120.5" r="1.45" fill="#80283a"/>
<circle cx="131" cy="330.5" r="1.45" fill="#80283a"/>
<circle cx="70.5" cy="330.5" r="1.45" fill="#80283a"/>
<circle cx="203.3" cy="330.5" r="1.45" fill="#80283a"/>
<circle cx="311" cy="330.5" r="1.45" fill="#80283a"/>
<circle cx="353" cy="330.5" r="1.45" fill="#80283a"/>
<circle cx="311" cy="252.5" r="1.45" fill="#80283a"/>
<circle cx="353" cy="252.5" r="1.45" fill="#80283a"/>
<path d="M428 183.4 L434.4 183.4 L431.2 189.6 Z" fill="#22aa22"/>
<path d="M368.2 249.6 L374.8 252.3 L368.2 255 Z" fill="#22aa22"/>
<rect x="437.9" y="196" width="41.5" height="21.5" fill="#fbf8b8" stroke="none" stroke-width="1"/>
<text x="441.6" y="205.8" font-family="Liberation Sans" font-size="7.8" fill="#2a2a2a" textLength="29" lengthAdjust="spacingAndGlyphs" stroke="#2a2a2a" stroke-width="0.22">V: 4.26 V</text>
<text x="441.6" y="214.2" font-family="Liberation Sans" font-size="7.8" fill="#2a2a2a" textLength="33.6" lengthAdjust="spacingAndGlyphs" stroke="#2a2a2a" stroke-width="0.22">I: 23.7 mA</text>
<rect x="378.7" y="262.6" width="40.7" height="20.4" fill="#fbf8b8" stroke="none" stroke-width="1"/>
<text x="381.2" y="271.8" font-family="Liberation Sans" font-size="7.8" fill="#2a2a2a" textLength="30.1" lengthAdjust="spacingAndGlyphs" stroke="#2a2a2a" stroke-width="0.22">V: 2.19 V</text>
<text x="381.2" y="280.6" font-family="Liberation Sans" font-size="7.8" fill="#2a2a2a" textLength="35.8" lengthAdjust="spacingAndGlyphs" stroke="#2a2a2a" stroke-width="0.22">I: -10.7 pA</text>
<path d="M434.30 187.02 L436.52 187.02 M435.78 184.80 L435.78 192.20 L435.04 191.46 M434.30 189.98 L436.52 188.50 M437.26 185.54 L441.70 185.54 M437.26 185.54 L437.26 187.02 M441.70 185.54 L441.70 187.02 M438.74 186.28 L438.00 187.76 M440.22 186.28 L440.96 187.76 M437.26 189.24 L441.70 189.24 M439.48 187.76 L439.48 192.20 M439.48 189.24 L437.26 192.20 M439.48 189.24 L441.70 192.20 M443.78 184.80 L442.30 187.76 M443.04 186.28 L445.26 186.28 M443.04 188.50 L445.26 188.50 M443.78 188.50 L443.78 192.20 L445.26 190.72 M446.00 187.76 L449.70 187.76 M447.85 184.80 L447.85 192.20" fill="none" stroke="#3a3a3a" stroke-width="0.85" stroke-linecap="square"/>
<text x="450.5" y="192.6" font-family="Liberation Sans" font-size="8" fill="#333" stroke="#333" stroke-width="0.2">1</text>
<path d="M369.20 259.02 L371.42 259.02 M370.68 256.80 L370.68 264.20 L369.94 263.46 M369.20 261.98 L371.42 260.50 M372.16 257.54 L376.60 257.54 M372.16 257.54 L372.16 259.02 M376.60 257.54 L376.60 259.02 M373.64 258.28 L372.90 259.76 M375.12 258.28 L375.86 259.76 M372.16 261.24 L376.60 261.24 M374.38 259.76 L374.38 264.20 M374.38 261.24 L372.16 264.20 M374.38 261.24 L376.60 264.20 M378.68 256.80 L377.20 259.76 M377.94 258.28 L380.16 258.28 M377.94 260.50 L380.16 260.50 M378.68 260.50 L378.68 264.20 L380.16 262.72 M380.90 259.76 L384.60 259.76 M382.75 256.80 L382.75 264.20" fill="none" stroke="#3a3a3a" stroke-width="0.85" stroke-linecap="square"/>
<text x="385" y="264.4" font-family="Liberation Sans" font-size="8" fill="#333" stroke="#333" stroke-width="0.2">2</text>
</svg></body></html>
